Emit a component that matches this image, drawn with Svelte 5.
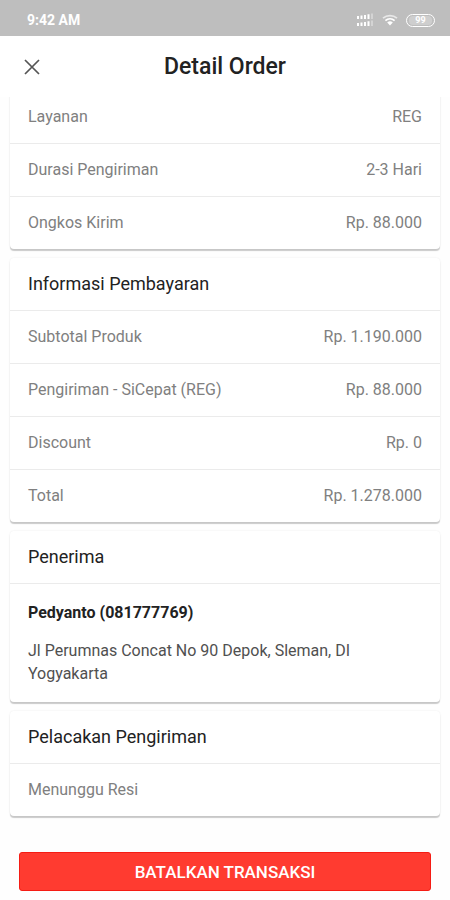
<script lang="ts">
	const shipping = [
		{ label: 'Layanan', value: 'REG' },
		{ label: 'Durasi Pengiriman', value: '2-3 Hari' },
		{ label: 'Ongkos Kirim', value: 'Rp. 88.000' }
	];

	const payment = [
		{ label: 'Subtotal Produk', value: 'Rp. 1.190.000' },
		{ label: 'Pengiriman - SiCepat (REG)', value: 'Rp. 88.000' },
		{ label: 'Discount', value: 'Rp. 0' },
		{ label: 'Total', value: 'Rp. 1.278.000' }
	];
</script>

{#snippet rows(items: { label: string; value: string }[])}
	<dl>
		{#each items as item}
			<div class="row">
				<dt>{item.label}</dt>
				<dd>{item.value}</dd>
			</div>
		{/each}
	</dl>
{/snippet}

<div class="top">
	<div class="status">
		<span>9:42 AM</span>
		<div class="icons">
			<svg width="18" height="14" viewBox="0 0 18 14" fill="#fff" aria-hidden="true">
				<path d="M1 3h2v3H1zM4.5 2.5h2V6h-2zM8 2h2v4H8zM11.5 1.3h2V6h-2z" />
				<path d="M1 10h2v3H1zM4.5 9.5h2V13h-2zM8 9h2v4H8zM11.5 8.3h2V13h-2z" />
				<path d="M15 .5h2V6h-2zM15 7.5h2V13h-2z" opacity=".35" />
			</svg>
			<svg width="16" height="12" viewBox="0 0 16 12" fill="none" stroke="#fff" stroke-width="1.7" aria-hidden="true">
				<path d="M1 4.2a10.5 10.5 0 0 1 14 0" opacity=".65" />
				<path d="M3.4 6.6a7 7 0 0 1 9.2 0" />
				<path d="M8 11.5 5.2 8.6a4 4 0 0 1 5.6 0z" fill="#fff" stroke="none" />
			</svg>
			<span class="battery"><span>99</span></span>
		</div>
	</div>
	<header>
		<button class="close" aria-label="Tutup">
			<svg width="16" height="16" viewBox="0 0 16 16" fill="none" stroke="#555" stroke-width="1.7" aria-hidden="true">
				<path d="M1 1l14 14M15 1L1 15" />
			</svg>
		</button>
		<h1>Detail Order</h1>
	</header>
</div>

<main>
	<section class="card scrolled">
		{@render rows(shipping)}
	</section>

	<section class="card">
		<h2>Informasi Pembayaran</h2>
		{@render rows(payment)}
	</section>

	<section class="card">
		<h2>Penerima</h2>
		<div class="receiver">
			<strong>Pedyanto (081777769)</strong>
			<p>Jl Perumnas Concat No 90 Depok, Sleman, DI Yogyakarta</p>
		</div>
	</section>

	<section class="card">
		<h2>Pelacakan Pengiriman</h2>
		<p class="row">Menunggu Resi</p>
	</section>

	<button class="cancel">BATALKAN TRANSAKSI</button>
</main>

<style>
	:global(body) {
		background: #fefefe;
		font-family: Roboto, sans-serif;
		color: #222;
	}

	.top {
		position: sticky;
		top: 0;
		z-index: 1;
		background: #fff;
	}

	.status {
		display: flex;
		align-items: center;
		justify-content: space-between;
		height: 36px;
		padding: 4px 15px 0 27px;
		box-sizing: border-box;
		background: #bebebe;
		color: #fff;
		font-size: 14px;
		font-weight: 700;
	}

	.icons {
		display: flex;
		align-items: center;
		gap: 8px;
	}

	.battery {
		display: flex;
		align-items: center;
		justify-content: center;
		width: 29px;
		height: 13px;
		box-sizing: border-box;
		padding: 2px;
		border: 1px solid #fff;
		border-radius: 7px;
		font-size: 9px;
		line-height: 9px;
	}

	.battery span {
		flex: 1;
		border-radius: 4px;
		background: rgba(255, 255, 255, 0.25);
		text-align: center;
	}

	header {
		display: grid;
		grid-template-columns: 64px 1fr 64px;
		align-items: center;
		height: 61px;
	}

	.close {
		display: grid;
		place-items: center;
		width: 64px;
		height: 48px;
		padding: 0;
		border: none;
		background: none;
	}

	h1 {
		margin: 0;
		font-size: 23px;
		font-weight: 500;
		line-height: 28px;
		text-align: center;
	}

	main {
		display: flex;
		flex-direction: column;
		gap: 9px;
		padding: 0 10px 8px;
	}

	.card {
		border-radius: 4px;
		background: #fff;
		box-shadow:
			0 2px 1px rgba(0, 0, 0, 0.2),
			0 0 2px rgba(0, 0, 0, 0.08);
	}

	/* the first rows sit partly under the sticky header */
	.scrolled {
		margin-top: -6px;
	}

	h2 {
		margin: 0;
		padding: 0 18px;
		font-size: 18px;
		font-weight: 400;
		line-height: 52px;
	}

	dl,
	dd,
	p {
		margin: 0;
	}

	.row {
		display: flex;
		justify-content: space-between;
		padding: 0 18px;
		color: #808080;
		font-size: 16px;
		line-height: 52px;
	}

	.row + .row,
	h2 + * {
		border-top: 1px solid #ebebeb;
	}

	.receiver {
		padding: 17px 18px;
		font-size: 16px;
		line-height: 23px;
	}

	.receiver strong {
		display: block;
		margin-bottom: 15px;
		font-weight: 700;
	}

	.receiver p {
		color: #505050;
	}

	.cancel {
		height: 39px;
		margin: 27px 9px 0;
		border: 1px solid #f51c14;
		border-radius: 3px;
		background: #ff3b30;
		color: #fff;
		font-family: inherit;
		font-size: 17px;
		font-weight: 500;
	}
</style>
